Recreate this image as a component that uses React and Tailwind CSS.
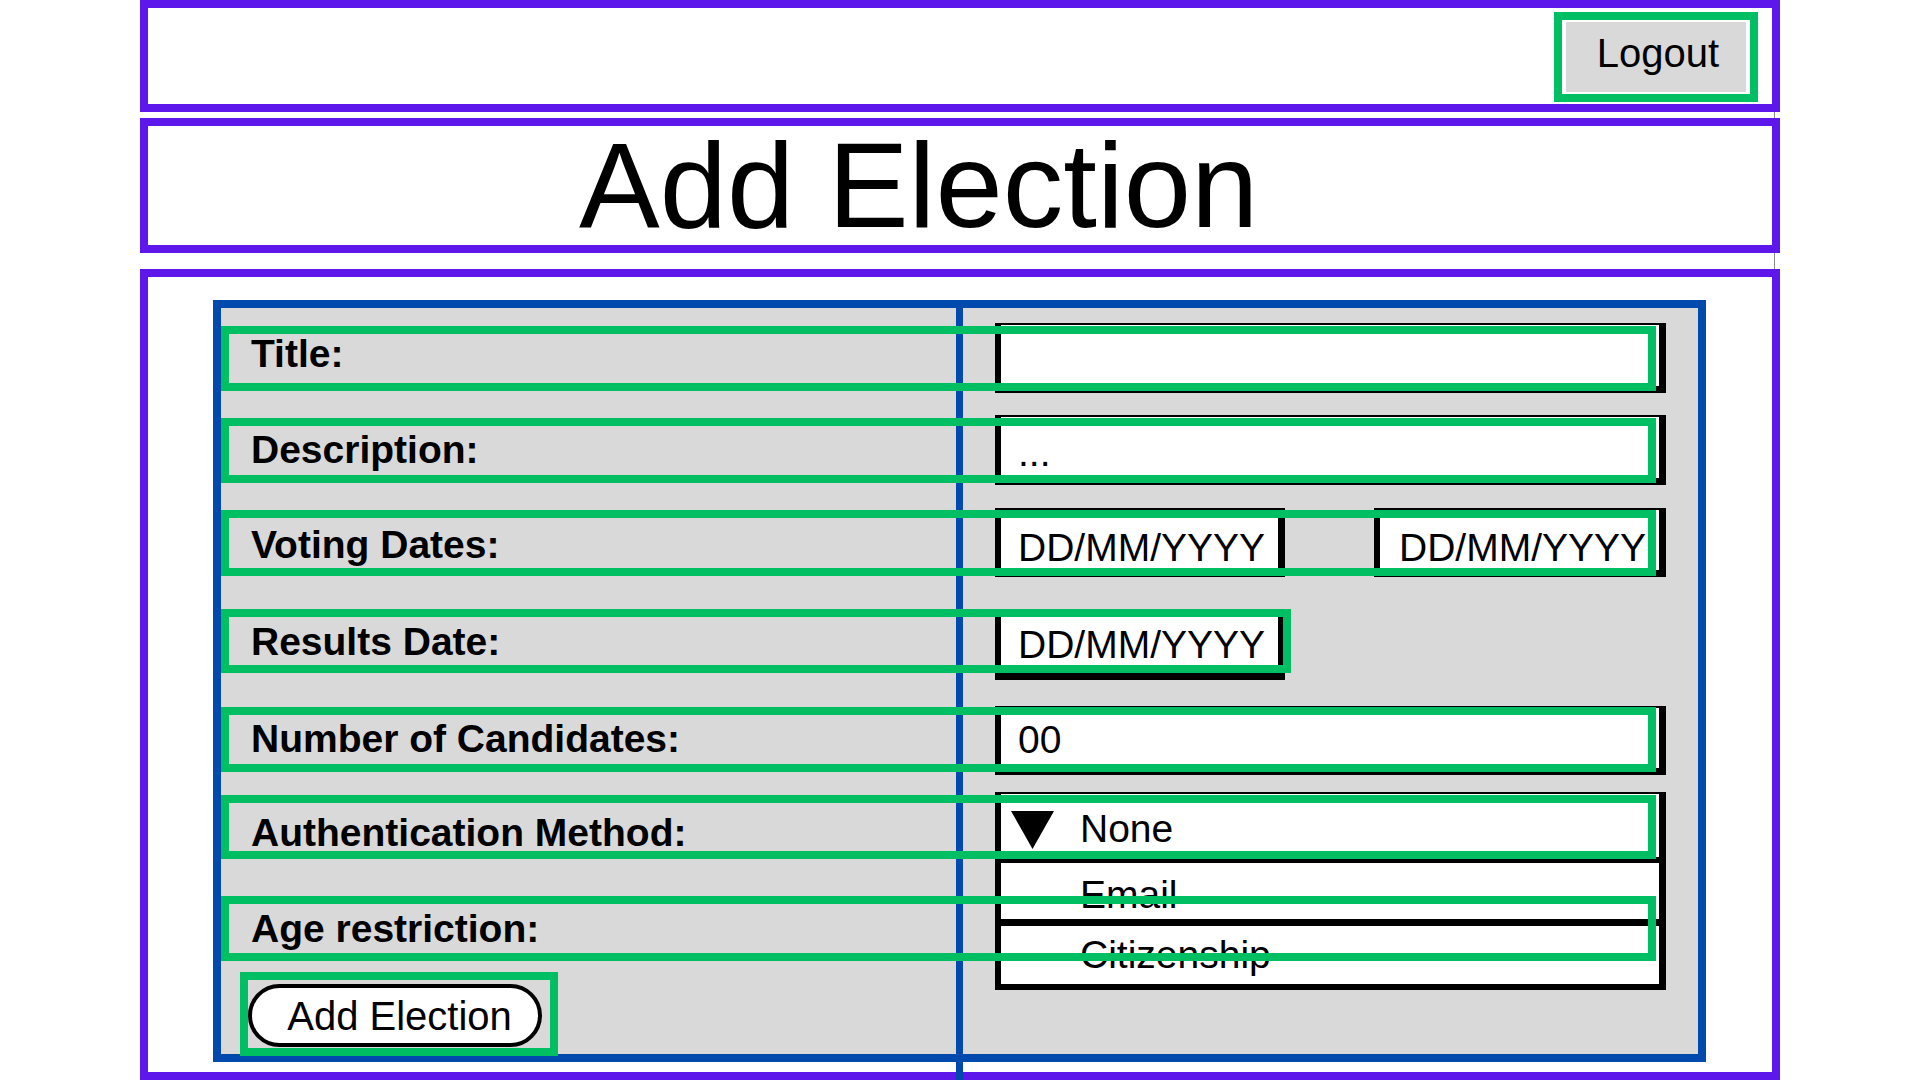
import React from 'react';

// label rows of the form, each one wrapped in its green frame
const labelRows = [
    { label: 'Title:', cls: 'h-[65px] w-[1435px] pb-[8px]', text: '' },
    { label: 'Description:', cls: 'mt-[27px] h-[65px] w-[1435px]', text: '' },
    { label: 'Voting Dates:', cls: 'mt-[27px] h-[66px] w-[1435px]', text: 'mt-[5px]' },
    { label: 'Results Date:', cls: 'mt-[33px] h-[64px] w-[1070px]', text: 'mt-[2px]' },
    { label: 'Number of Candidates:', cls: 'mt-[34px] h-[65px] w-[1435px]', text: '' },
    { label: 'Authentication Method:', cls: 'mt-[23px] h-[64px] w-[1435px]', text: 'mt-[12px]' },
    { label: 'Age restriction:', cls: 'mt-[37px] h-[65px] w-[1435px]', text: 'mt-[2px]' },
];

const Field = ({ className = '', text, textClass = '' }) => (
    <div className={`bg-white border-black border-t-2 border-l-[6px] border-r-[7px] border-b-[7px] flex items-center pl-[17px] ${className}`}>
        {text && <span className={textClass}>{text}</span>}
    </div>
);

const App = () => {
    return (
        <div className="relative w-[1920px] h-[1080px] bg-white overflow-hidden font-['Liberation_Sans',Arial,sans-serif] text-black">
            {/* thin scroll line at the right edge */}
            <div className="absolute left-[1774px] top-0 h-full w-px bg-[#8a8a8a]" />

            <div className="relative ml-[140px] w-[1640px] flex flex-col">

                {/* Top bar */}
                <header className="h-[112px] border-[8px] border-[#5e17eb] bg-white flex justify-end items-start">
                    <div className="mt-[4px] mr-[14px] w-[204px] h-[90px] border-[8px] border-[#00bf63] px-[4px] py-[2px]">
                        <button className="w-full h-full bg-[#d9d9d9] text-[40px] leading-none pb-[8px] pl-[4px] flex items-center justify-center">
                            Logout
                        </button>
                    </div>
                </header>

                {/* Page title */}
                <div className="mt-[6px] h-[135px] border-[8px] border-[#5e17eb] bg-white flex items-center pl-[431px]">
                    <h1 className="text-[121px] leading-none font-normal">Add Election</h1>
                </div>

                {/* Form area */}
                <div className="relative mt-[16px] h-[811px] border-[8px] border-[#5e17eb] bg-white pl-[65px] pr-[66px] pt-[23px] pb-[10px]">
                    <div className="absolute left-[808px] top-[23px] -bottom-[8px] w-[7px] bg-[#004aad]" />

                    <div className="h-full border-[8px] border-[#004aad] bg-[#d9d9d9] grid grid-cols-1 grid-rows-1">

                        {/* Inputs column */}
                        <div className="col-start-1 row-start-1 pl-[774px] pr-[32px] pt-[15px] flex flex-col text-[39px]">
                            <Field className="h-[70px]" />
                            <Field className="mt-[22px] h-[70px]" text="..." textClass="mt-[11px]" />
                            <div className="mt-[23px] flex justify-between">
                                <Field className="h-[69px] w-[290px]" text="DD/MM/YYYY" textClass="mt-[17px]" />
                                <Field className="h-[69px] w-[292px] pl-[19px]" text="DD/MM/YYYY" textClass="mt-[17px]" />
                            </div>
                            <Field className="mt-[38px] h-[65px] w-[290px]" text="DD/MM/YYYY" />
                            <Field className="mt-[26px] h-[69px]" text="00" textClass="mt-[5px]" />

                            <div className="mt-[17px] bg-white border-black border-t-2 border-l-[6px] border-r-[7px] flex flex-col">
                                <div className="h-[69px] border-b-[6px] border-black flex items-center pl-[10px]">
                                    <svg width="43" height="38" viewBox="0 0 43 38" className="mt-[9px]">
                                        <polygon points="0,0 43,0 21.5,38" fill="#000" />
                                    </svg>
                                    <span className="ml-[26px] mt-[7px]">None</span>
                                </div>
                                <div className="h-[63px] border-b-[7px] border-black flex items-center pl-[79px]">
                                    <span className="mt-[8px]">Email</span>
                                </div>
                                <div className="h-[64px] border-b-[6px] border-black flex items-center pl-[79px]">
                                    <span>Citizenship</span>
                                </div>
                            </div>
                        </div>

                        {/* Labels with green frames */}
                        <div className="col-start-1 row-start-1 relative z-10 flex flex-col items-start pt-[18px]">
                            {labelRows.map((row, index) => (
                                <div key={index} className={`shrink-0 border-[8px] border-[#00bf63] flex items-center pl-[22px] ${row.cls}`}>
                                    <span className={`text-[39px] font-bold ${row.text}`}>{row.label}</span>
                                </div>
                            ))}
                            <div className="shrink-0 mt-[11px] ml-[19px] w-[318px] h-[84px] border-[8px] border-[#00bf63] pt-[4px]">
                                <button className="w-[294px] h-[63px] rounded-full border-[4px] border-black bg-white text-[40px] leading-none pl-[9px] flex items-center justify-center">
                                    Add Election
                                </button>
                            </div>
                        </div>

                    </div>
                </div>

            </div>
        </div>
    );
};

export default App;
